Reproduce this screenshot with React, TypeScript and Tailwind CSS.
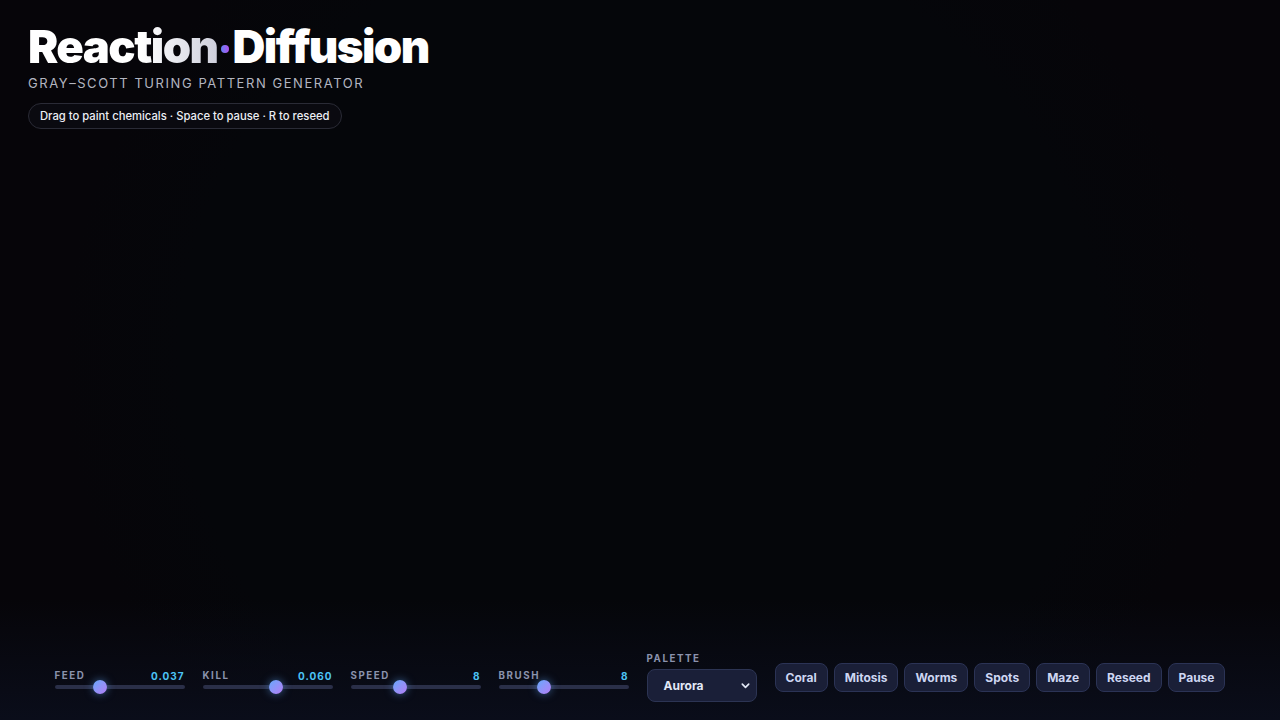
import React from "react";

type SliderDef = { label: string; value: string; pos: number };

const sliders: SliderDef[] = [
  { label: "FEED", value: "0.037", pos: 0.336 },
  { label: "KILL", value: "0.060", pos: 0.569 },
  { label: "SPEED", value: "8", pos: 0.37 },
  { label: "BRUSH", value: "8", pos: 0.336 },
];

const presets = ["Coral", "Mitosis", "Worms", "Spots", "Maze", "Reseed", "Pause"];

function Slider({ label, value, pos }: SliderDef) {
  return (
    <div className="flex w-[130px] flex-col pt-[4px]">
      <div className="flex items-center justify-between text-[9.75px] font-bold leading-[12px] tracking-[0.16em]">
        <span className="text-[#8b93ad]">{label}</span>
        <span className="text-[10px] tracking-[0.1em] text-[#4cc3f5]">{value}</span>
      </div>
      <div className="relative mt-[3px] h-[4px] rounded-full bg-[#2a2f48]">
        <div
          className="absolute top-1/2 h-[14px] w-[14px] -translate-y-1/2 rounded-full bg-gradient-to-br from-[#5fa8fb] to-[#b07cf6] shadow-[0_0_8px_rgba(96,165,250,0.55)]"
          style={{ left: `${pos * 116}px` }}
        />
      </div>
    </div>
  );
}

export default function App() {
  return (
    <div
      className="relative flex h-[720px] w-[1280px] flex-col overflow-hidden bg-[#050508] text-white"
      style={{ fontFamily: "Inter, 'Noto Sans', sans-serif" }}
    >
      {/* soft vignette behind the simulation canvas */}
      <div className="pointer-events-none absolute inset-0 bg-[radial-gradient(ellipse_45%_75%_at_50%_50%,#05060a_0%,#05060a_80%,#060509_100%)]" />
      <div className="pointer-events-none absolute inset-x-0 bottom-0 h-[120px] bg-gradient-to-b from-transparent to-[#0a0d1a]" />

      <header className="relative flex flex-col items-start px-[28px] pt-[22px]">
        <h1 className="flex items-center text-[45.5px] font-black leading-[50px] tracking-[-0.035em]">
          <span className="bg-gradient-to-r from-white from-60% to-[#cfd0dc] bg-clip-text text-transparent">
            Reaction
          </span>
          <span className="mx-[3.5px] mt-[4px] inline-block h-[8px] w-[8px] rounded-full bg-gradient-to-r from-[#5b7ff5] to-[#b04ef0]" />
          <span>Diffusion</span>
        </h1>
        <p className="mt-[2px] text-[13px] font-normal leading-[18px] tracking-[0.12em] text-[#b3b5c0]">
          GRAY–SCOTT TURING PATTERN GENERATOR
        </p>
        <div className="mt-[11px] flex h-[26px] items-center rounded-full border border-[#2a2b36] bg-[#0a0a10] px-[11px] text-[11.25px] font-medium text-[#eceef4]">
          Drag to paint chemicals · Space to pause · R to reseed
        </div>
      </header>

      <div className="flex-1" />

      <footer className="relative flex items-center justify-center gap-[18px] pb-[18px]">
        {sliders.map((s) => (
          <Slider key={s.label} {...s} />
        ))}
        <div className="flex w-[110px] flex-col">
          <span className="text-[9.75px] font-bold leading-[12px] tracking-[0.16em] text-[#8b93ad]">PALETTE</span>
          <div className="mt-[4px] flex h-[33px] items-center justify-between rounded-[8px] border border-[#2c3453] bg-[#1a1f38] pl-[16px] pr-[5px] text-[12px] font-bold text-[#e2e8f6]">
            <span>Aurora</span>
            <svg width="11" height="11" viewBox="0 0 24 24" fill="none" stroke="#e2e8f6" strokeWidth="3.6" strokeLinecap="round" strokeLinejoin="round">
              <path d="M5 9l7 7 7-7" />
            </svg>
          </div>
        </div>
        <div className="flex items-center gap-[6px]">
          {presets.map((p) => (
            <button
              key={p}
              className="h-[29px] rounded-[8px] border border-[#2b3355] bg-[#1a1f37] px-[10px] text-[12px] font-bold text-[#cdd6f2]"
            >
              {p}
            </button>
          ))}
        </div>
      </footer>
    </div>
  );
}
